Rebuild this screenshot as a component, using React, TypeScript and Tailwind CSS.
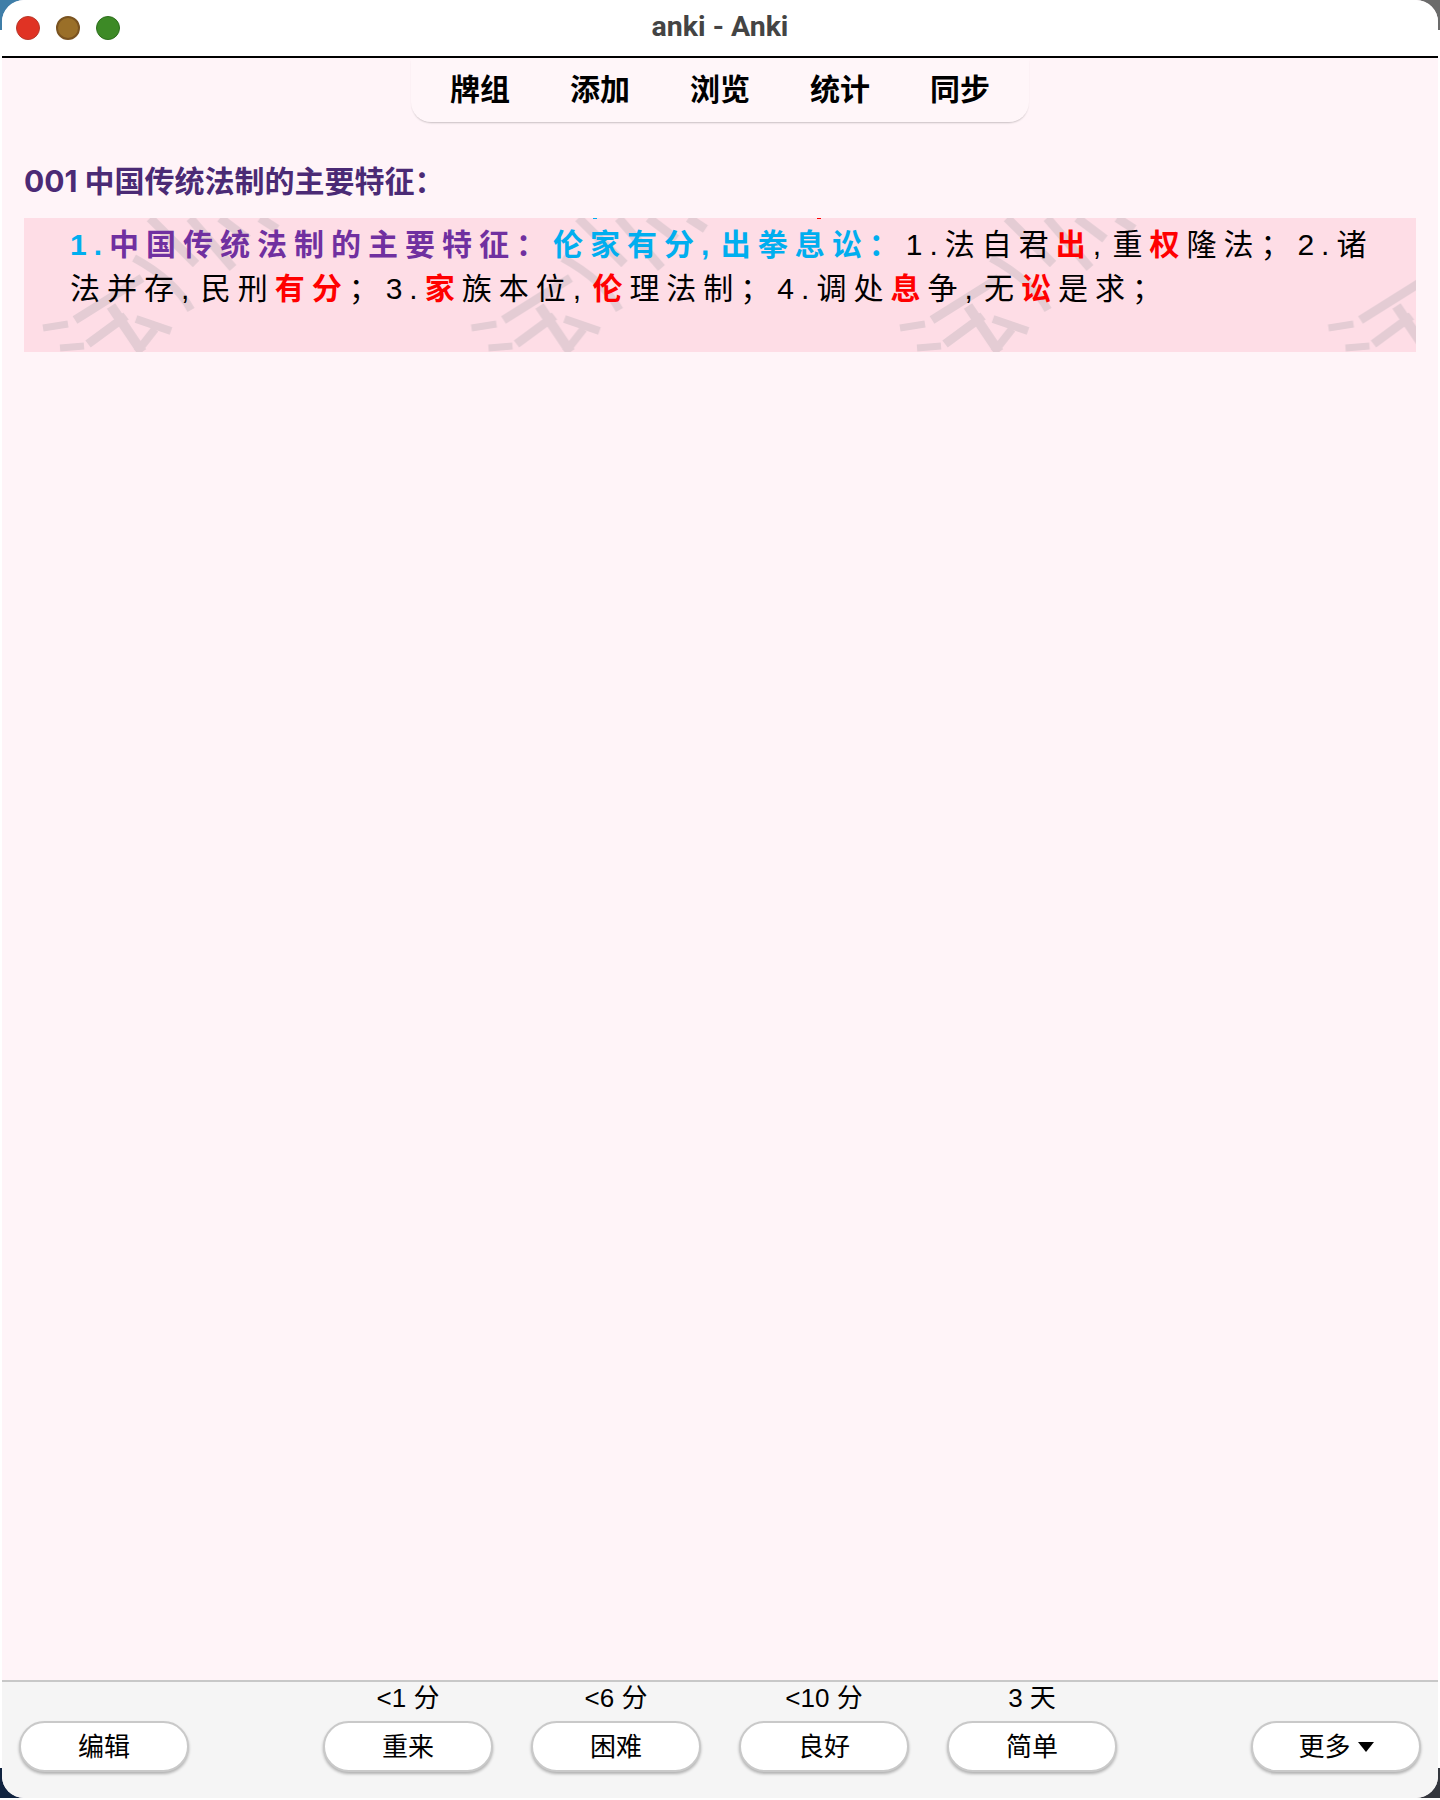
const cjk = "font-['Liberation_Sans','Noto_Sans_CJK_SC',sans-serif]";

function Watermark() {
  return (
    <svg className="absolute inset-0 h-full w-full" aria-hidden="true">
      <defs>
        <pattern id="wm" x="0" y="0" width="428.5" height="134" patternUnits="userSpaceOnUse">
          <g fill="none" stroke="#e4ccd4" strokeWidth="9">
            <path d="M19 110 L44 106" strokeWidth="7" />
            <path d="M36 130 L60 128" strokeWidth="7" />
            <path d="M51 102 L118 60" />
            <path d="M64 126 L102 98" />
            <path d="M112 101 L147 113" strokeWidth="8" />
            <path d="M87 88 L118 134" strokeWidth="10" />
            <path d="M131 111 L113 134" strokeWidth="8" />
            <path d="M110 40 C132 52 154 68 167 92" strokeWidth="8" />
            <path d="M126 0 L172 46" />
            <path d="M166 0 L209 50" />
            <path d="M196 0 L224 21" />
            <path d="M236 0 L253 11" />
          </g>
        </pattern>
      </defs>
      <rect width="100%" height="100%" fill="url(#wm)" />
    </svg>
  );
}

function Nav() {
  const items = ["牌组", "添加", "浏览", "统计", "同步"];
  return (
    <div className="flex justify-center">
      <div className="flex h-[64px] w-[618px] items-center justify-center gap-[60px] rounded-b-[20px] bg-[#fff6f9] shadow-[0_2px_2px_-1px_rgba(0,0,0,0.22)]">
        {items.map((t) => (
          <span key={t} className="text-[30px] font-bold leading-none text-black">
            {t}
          </span>
        ))}
      </div>
    </div>
  );
}

function Answer({ time, label }: { time: string; label: string }) {
  return (
    <div className="flex w-[170px] flex-col items-center">
      <div className="h-[39px] text-[26px] leading-[33px] text-black">{time}</div>
      <Btn>{label}</Btn>
    </div>
  );
}

function Btn({ children }: { children: React.ReactNode }) {
  return (
    <button className="flex h-[51px] w-[170px] items-center justify-center rounded-[26px] border-2 border-[#c9c9c9] bg-white pt-[1px] text-[26px] text-black shadow-[0_2px_3px_rgba(0,0,0,0.28)]">
      {children}
    </button>
  );
}

const R = ({ children }: { children: React.ReactNode }) => <span className="font-bold text-[#ff0000]">{children}</span>;

export default function App() {
  return (
    <div className={`relative h-[1800px] w-[1440px] overflow-hidden bg-white ${cjk}`}>
      <div className="absolute left-0 top-0 h-[30px] w-[30px] bg-[#3f7ea8]" />
      <div className="absolute right-0 top-0 h-[30px] w-[30px] bg-[#6b6b6b]" />
      <div className="absolute bottom-[2px] left-0 h-[30px] w-[30px] bg-[#10233f]" />
      <div className="absolute bottom-[2px] right-0 h-[30px] w-[30px] bg-[#33363d]" />
      <div className="relative mx-[2px] flex h-[1798px] flex-col overflow-hidden rounded-[22px] bg-[#fff4f8]">
        <header className="relative flex h-[58px] shrink-0 items-center justify-center border-b-2 border-black bg-white">
          <div className="absolute left-[14px] top-[16px] flex gap-[16px]">
            <span className="h-[24px] w-[24px] rounded-full border border-[#b8382a] bg-[#e03324]" />
            <span className="h-[24px] w-[24px] rounded-full border-2 border-[#7a5320] bg-[#9a6f28]" />
            <span className="h-[24px] w-[24px] rounded-full border border-[#2c6e1c] bg-[#3d8a26]" />
          </div>
          <span className="-mt-[1px] text-[28.5px] font-bold leading-none text-[#444444] font-['Roboto','Noto_Sans_CJK_SC',sans-serif]">anki - Anki</span>
        </header>
        <Nav />
        <main className="flex-1 px-[22px]">
          <h1 className="mt-[42px] h-[54px] text-[30px] font-bold leading-[34px] text-[#4b2a75] font-['Inter','Noto_Sans_CJK_SC',sans-serif]">
            001 中国传统法制的主要特征：
          </h1>
          <div className="relative h-[134px] overflow-hidden bg-[#fedde6]">
            <Watermark />
            <span className="absolute left-[569px] top-0 h-[1px] w-[4px] bg-[#00aeef]" />
            <span className="absolute left-[793px] top-0 h-[1px] w-[4px] bg-[#ff0000]" />
            <p className="relative pl-[46px] pr-[20px] pt-[5px] text-[30px] leading-[44px] tracking-[7px] [word-spacing:-11px] text-black font-['Liberation_Sans','Noto_Sans_CJK_SC',sans-serif]">
              <span className="font-bold text-[#00aeef]">1.</span>
              <span className="font-bold text-[#7030a0]">中国传统法制的主要特征：</span>
              <span className="font-bold text-[#00aeef]">伦家有分, 出拳息讼：</span>
              1.法自君<R>出</R>, 重<R>权</R>隆法；2.诸法并存, 民刑<R>有分</R>；3.<R>家</R>族本位, <R>伦</R>理法制；4.调处<R>息</R>争, 无<R>讼</R>是求；
            </p>
          </div>
        </main>
        <footer className="relative flex h-[118px] shrink-0 justify-between border-t-2 border-[#c8c8c8] bg-[#f5f5f5] pl-[17px] pr-[17px]">
          <div className="pt-[39px]">
            <Btn>编辑</Btn>
          </div>
          <div className="flex gap-[38px]">
            <Answer time="<1 分" label="重来" />
            <Answer time="<6 分" label="困难" />
            <Answer time="<10 分" label="良好" />
            <Answer time="3 天" label="简单" />
          </div>
          <div className="pt-[39px]">
            <Btn>
              更多
              <svg width="16" height="10" viewBox="0 0 16 10" className="ml-[7px]">
                <path d="M0 0 H16 L8 10 Z" fill="#000" />
              </svg>
            </Btn>
          </div>
        </footer>
      </div>
    </div>
  );
}
